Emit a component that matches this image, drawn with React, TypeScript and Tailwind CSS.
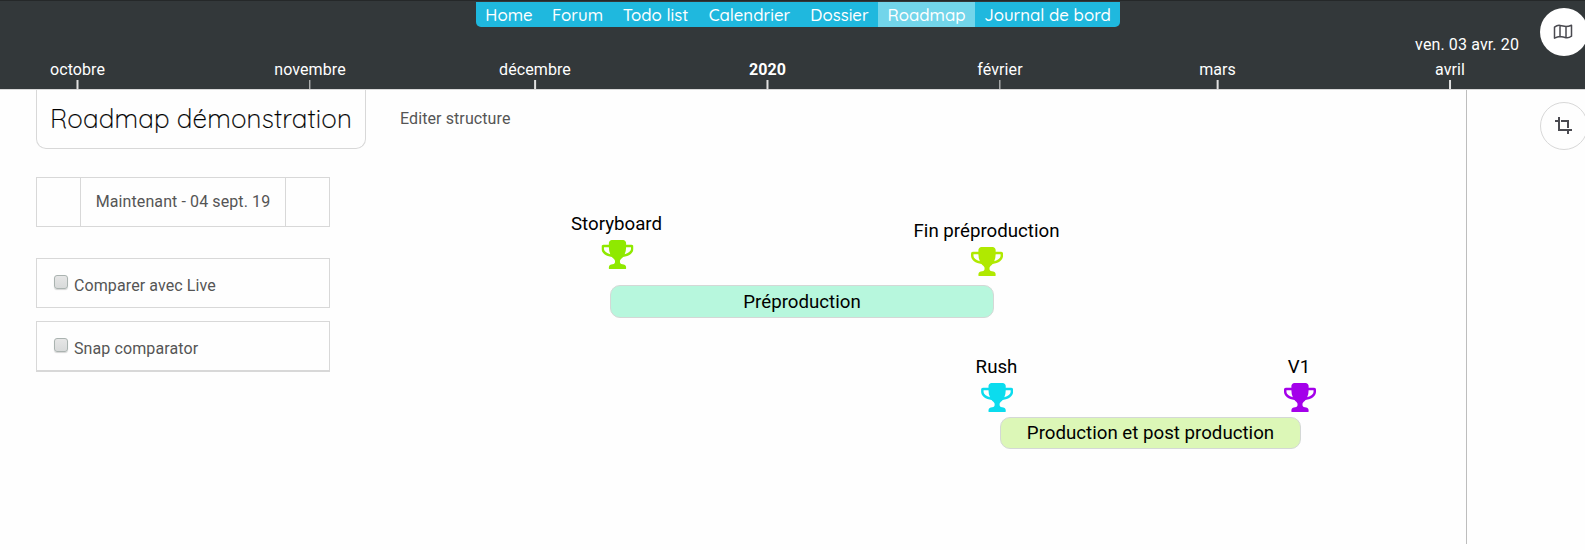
const tabs: [string, string][] = [
  ["Home", "w-[66px]"],
  ["Forum", "w-[71px]"],
  ["Todo list", "w-[85px]"],
  ["Calendrier", "w-[103px]"],
  ["Dossier", "w-[77px]"],
  ["Roadmap", "w-[97px]"],
  ["Journal de bord", "w-[145px]"],
];

const months: [string, number][] = [
  ["octobre", 77.5],
  ["novembre", 310],
  ["décembre", 535],
  ["2020", 767.5],
  ["février", 1000],
  ["mars", 1217.5],
  ["avril", 1450],
];

const milestones = [
  { name: "Storyboard", x: 616.5, y: 213, color: "#8fe900" },
  { name: "Fin préproduction", x: 986.5, y: 220, color: "#b0e900" },
  { name: "Rush", x: 996.5, y: 356, color: "#0bdcee" },
  { name: "V1", x: 1299, y: 356, color: "#a400ea" },
];

const phases = [
  { name: "Préproduction", x: 610, y: 285, w: 384, h: 33, color: "#b7f7dd" },
  { name: "Production et post production", x: 1000, y: 417, w: 301, h: 32, color: "#dcf7b7" },
];

function Trophy({ color }: { color: string }) {
  return (
    <svg className="relative left-px h-[29px] w-8" viewBox="64 128 1664 1536" preserveAspectRatio="none" fill={color}>
      <path d="M522 883q-74-162-74-371h-256v96q0 78 94.500 162t235.500 113zm1078-275v-96h-256q0 209-74 371 141-29 235.500-113t94.500-162zm128-128v128q0 71-41.500 143t-112 130-173 97.500-215.500 44.500q-42 54-95 95-38 34-52.500 72.500t-14.500 89.500q0 54 30.500 91t97.500 37q75 0 133.500 45.500t58.500 114.500v64q0 14-9 23t-23 9h-832q-14 0-23-9t-9-23v-64q0-69 58.500-114.500t133.500-45.500q67 0 97.500-37t30.500-91q0-51-14.500-89.500t-52.500-72.500q-53-41-95-95-113-5-215.500-44.500t-173-97.500-112-130-41.500-143v-128q0-40 28-68t68-28h288v-96q0-66 47-113t113-47h576q66 0 113 47t47 113v96h288q40 0 68 28t28 68z" />
    </svg>
  );
}

function MapIcon() {
  return (
    <svg width="20" height="16" viewBox="0 0 20 16" fill="none" stroke="#4a4a50" strokeWidth="1.500" strokeLinejoin="round">
      <path d="M1.500 3.200 Q4.500 .9 7 1.400 T13 2.600 Q15.500 2.600 18.500 1.200 V12.200 Q15.500 14.400 13 13.700 T7 12.500 Q4.500 12.500 1.500 14.200ZM7 1.400v11.100M13 2.600v11.100" />
    </svg>
  );
}

function CropIcon() {
  return (
    <svg width="17" height="17" viewBox="0 0 17 17" fill="none" stroke="#4a4a50" strokeWidth="2">
      <path d="M4 0v13h13M0 4h3M6 4h7v7M13 14v3" />
    </svg>
  );
}

function CompareOption({ label, last }: { label: string; last?: boolean }) {
  return (
    <label className={`flex w-[294px] border border-[#d8d8d8] pl-[17px] text-base tracking-[0.100px] text-[#555] ${last ? "mt-[13px] h-[51px] border-b-2" : "mt-[31px] h-[50px]"}`}>
      <input
        type="checkbox"
        className="mt-4 mr-[6px] h-[14px] w-[14px] appearance-none rounded-[3px] border border-[#aab3b0] bg-linear-to-b from-[#e6e6e6] to-[#d8dada] shadow-[0_1px_1px_#d5d5d5]"
      />
      <span className="mt-[15px] leading-6">{label}</span>
    </label>
  );
}

export default function App() {
  return (
    <div className="relative h-[550px] w-full overflow-hidden bg-[#fefefe] font-[Roboto,sans-serif] text-black">
      <header className="relative h-[90px] border-t border-b border-t-[#252829] border-b-[#d8d8d8] bg-[#33383a] text-white">
        <nav className="mt-px ml-[476px] flex h-[25px] w-[644px] overflow-hidden rounded-b-[5px] bg-[#1fb8de] font-[Quicksand,Lato,sans-serif] text-[16.800px] leading-[25px] font-medium">
          {tabs.map(([name, width]) => (
            <a key={name} className={`${width} text-center whitespace-nowrap ${name === "Roadmap" ? "bg-[#72d5ea]" : ""}`}>
              {name}
            </a>
          ))}
        </nav>
        {months.map(([name, x]) => (
          <div key={name} className="absolute top-[57px] flex -translate-x-1/2 flex-col items-center" style={{ left: x }}>
            <span className={`h-[22px] text-base leading-6 tracking-[0.080px] ${name === "2020" ? "font-bold" : ""}`}>{name}</span>
            <span className="h-[9px] w-[1.500px] bg-[#e0e0e0]" />
          </div>
        ))}
        <span className="absolute top-8 right-[66px] text-base leading-6 tracking-[0.120px]">ven. 03 avr. 20</span>
      </header>

      <main className="ml-9">
        <div className="flex">
          <h1 className="h-[59px] w-[330px] rounded-b-[10px] border border-t-0 border-[#d8d8d8] text-center font-[Quicksand,Lato,sans-serif] text-[26px] leading-[58px] font-light tracking-[0.150px] whitespace-nowrap [-webkit-text-stroke:0.200px_black]">
            Roadmap démonstration
          </h1>
          <a className="ml-[34px] leading-[57px] tracking-[0.100px] text-[#555]">Editer structure</a>
        </div>
        <div className="mt-7 flex h-[50px] w-[294px] border border-[#d8d8d8] text-center leading-[48px] tracking-[0.100px] text-[#555]">
          <button className="w-11 border-r border-[#d8d8d8]" />
          <span className="flex-1">Maintenant - 04 sept. 19</span>
          <button className="w-11 border-l border-[#d8d8d8]" />
        </div>
        <CompareOption label="Comparer avec Live" />
        <CompareOption label="Snap comparator" last />
      </main>

      <div className="absolute top-[90px] left-[1466px] h-[454px] w-px bg-[#bdbdbd]" />

      {milestones.map((m) => (
        <div key={m.name} className="absolute flex -translate-x-1/2 flex-col items-center" style={{ left: m.x, top: m.y }}>
          <span className="h-[27px] text-[18.700px] leading-[22px] whitespace-nowrap">{m.name}</span>
          <Trophy color={m.color} />
        </div>
      ))}
      {phases.map((p) => (
        <div
          key={p.name}
          className="absolute flex items-center justify-center rounded-[10px] border border-[#d4d8d6] text-[18.700px] leading-[30px] whitespace-nowrap"
          style={{ left: p.x, top: p.y, width: p.w, height: p.h, backgroundColor: p.color }}
        >
          {p.name}
        </div>
      ))}

      <button className="absolute top-2 left-[1540px] flex h-12 w-12 items-center justify-center rounded-full bg-white pr-[2px] pb-px">
        <MapIcon />
      </button>
      <button className="absolute top-[102px] left-[1540px] flex h-12 w-12 items-center justify-center rounded-full border border-[#d8d8d8] bg-[#fefefe] pr-px pb-px">
        <CropIcon />
      </button>
    </div>
  );
}
